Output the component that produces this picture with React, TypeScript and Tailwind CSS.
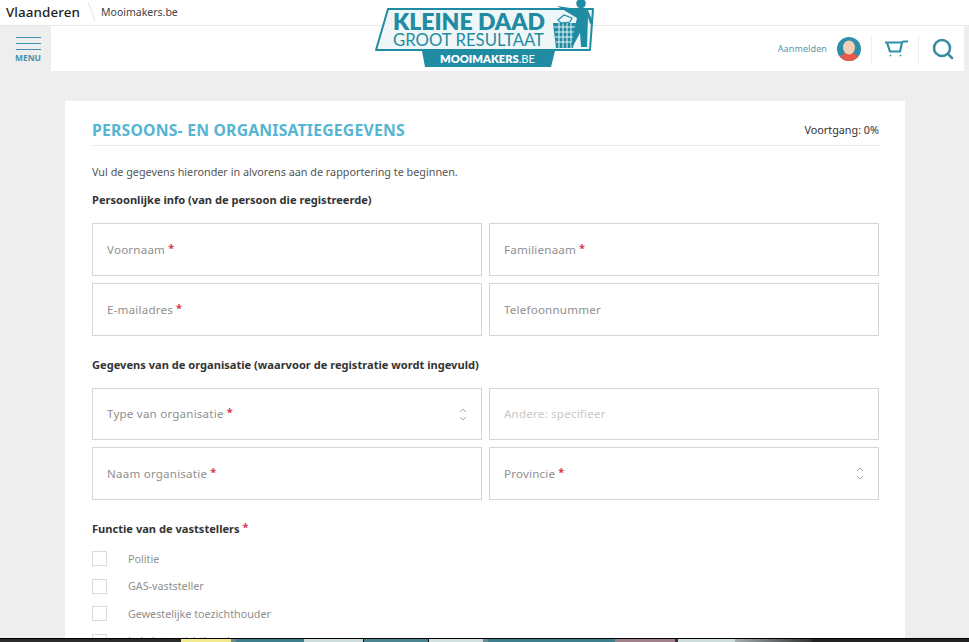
import React from 'react';
import { Search } from 'lucide-react';

const font = { fontFamily: '"Noto Sans", "Open Sans", sans-serif' };

function Star() {
  return <span className="text-[#e0344f] font-bold ml-[3px] relative -top-[2px] text-[11px]">*</span>;
}

function Field({ label, required, muted, select, short }: { label: string; required?: boolean; muted?: boolean; select?: boolean; short?: boolean }) {
  return (
    <div className={`${short ? 'h-[52px]' : 'h-[53px]'} border border-[#d5d5d5] flex items-center justify-between pl-[14px] pr-[13px]`}>
      <span className={`text-[11.6px] tracking-[0.2px] ${muted ? 'text-[#c8c8c8]' : 'text-[#8f8f8f]'}`}>
        {label}
        {required && <Star />}
      </span>
      {select && (
        <svg width="10" height="15" viewBox="0 0 10 15" fill="none" stroke="#a5a5a5" strokeWidth="1">
          <path d="M2 5l3-3 3 3M2 10l3 3 3-3" />
        </svg>
      )}
    </div>
  );
}

function Check({ label }: { label: string }) {
  return (
    <div className="flex items-center h-[27.5px]">
      <span className="w-[15px] h-[15px] border border-[#dcdcdc] shrink-0" />
      <span className="ml-[21px] text-[10.75px] text-[#8f8f8f]">{label}</span>
    </div>
  );
}

function Logo() {
  return (
    <svg width="222" height="68" viewBox="0 0 222 68" className="absolute left-[375px] top-0">
      <path d="M13 9H218L215 50H1Z" fill="#eef6f7" stroke="#1f8ca3" strokeWidth="2" strokeLinejoin="round" />
      <path d="M47 51H180L176 67H50Z" fill="#1f8ca3" />
      <text x="18" y="30" fontSize="22" fontWeight="800" fill="#1f8ca3" textLength="152" lengthAdjust="spacingAndGlyphs" fontFamily="Lato, sans-serif">KLEINE DAAD</text>
      <text x="18" y="46" fontSize="17" fontWeight="400" fill="#1f8ca3" textLength="151" lengthAdjust="spacingAndGlyphs" fontFamily="Lato, sans-serif">GROOT RESULTAAT</text>
      <text x="65" y="63" fontSize="11" fontWeight="800" fill="#ffffff" textLength="95" lengthAdjust="spacingAndGlyphs" fontFamily="Lato, sans-serif">
        MOOIMAKERS<tspan fontWeight="400">.BE</tspan>
      </text>
      {/* trash can */}
      <path d="M178 23H201L198 48H181Z" fill="#1f8ca3" />
      <path d="M179 27H200M180 32H200M180 37H199M181 42H198M184 23V48M188 23V48M192 23V48M196 23V48" stroke="#eef6f7" strokeWidth="1" />
      <path d="M183 20l6-5 8 3-2 4-9 1Z" fill="#eef6f7" stroke="#1f8ca3" strokeWidth="1.2" />
      {/* figure */}
      <circle cx="206" cy="3.500" r="4.800" fill="#1f8ca3" />
      <path d="M182 6L202 9 212 8 218 22 215 24 213 17 212 47H206L205 33 198 46 196 45 202 18Z" fill="#1f8ca3" />
    </svg>
  );
}

function Avatar() {
  return (
    <svg width="24" height="24" viewBox="0 0 24 24">
      <circle cx="12" cy="12" r="12" fill="#2f8fa8" />
      <path d="M3 20C5 16.500 8 16 12 16s7 .5 9 4A12 12 0 0 1 3 20Z" fill="#e8584d" />
      <ellipse cx="12" cy="10.500" rx="6" ry="7" fill="#f3cfb8" />
    </svg>
  );
}

function Cart() {
  return (
    <svg width="23" height="17" viewBox="0 0 23 17" fill="none" stroke="#2f8fa8" strokeWidth="2.200">
      <path d="M0 2.500H17M2 2.500L5 11.500H15L17 2.500Q17.500 1.500 19 1.500H23" />
      <circle cx="5.500" cy="15.500" r="0.500" fill="#2f8fa8" strokeWidth="1" />
      <circle cx="15.500" cy="15.500" r="0.500" fill="#2f8fa8" strokeWidth="1" />
    </svg>
  );
}

const taskbar = [
  { w: 'w-[181px]', c: 'bg-[#2b2b2b]' },
  { w: 'w-[50px]', c: 'bg-[#f0e98e]' },
  { w: 'w-[5px]', c: 'bg-[#6d8a90]' },
  { w: 'w-[68px]', c: 'bg-[#3f7f8c]' },
  { w: 'w-[59px]', c: 'bg-[#cfdcdc]' },
  { w: 'w-px', c: 'bg-[#111111]' },
  { w: 'w-[64px]', c: 'bg-[#4a8591]' },
  { w: 'w-px', c: 'bg-[#111111]' },
  { w: 'w-[54px]', c: 'bg-[#d3e0e0]' },
  { w: 'w-[5px]', c: 'bg-[#6d8a90]' },
  { w: 'w-[127px]', c: 'bg-[#3f7f8c]' },
  { w: 'w-[60px]', c: 'bg-[#a0808a]' },
  { w: 'w-[3px]', c: 'bg-[#333333]' },
  { w: 'w-[57px]', c: 'bg-[#cfdcdc]' },
  { w: 'w-[77px]', c: 'bg-linear-to-r from-[#a5b0b0] to-[#333333]' },
  { w: 'flex-1', c: 'bg-[#222222]' },
];

export default function App() {
  return (
    <div className="relative h-[642px] overflow-hidden bg-[#eeeeee] flex flex-col" style={font}>
      {/* Vlaanderen bar */}
      <div className="h-[26px] shrink-0 bg-white border-b border-[#e8e8e8] flex items-center pl-[6px]">
        <span className="text-[13.4px] font-medium text-[#222] tracking-[0.1px]">Vlaanderen</span>
        <svg width="12" height="24" viewBox="0 0 12 24" className="ml-[7px]">
          <path d="M1 1l7 19" stroke="#e5e5e5" fill="none" />
        </svg>
        <span className="ml-[2px] text-[10.5px] text-[#444]">Mooimakers.be</span>
      </div>

      {/* Site nav */}
      <div className="h-[45px] shrink-0 mx-[5px] flex">
        <div className="w-[46px] flex flex-col items-center pt-[11px]">
          <div className="w-[25px] flex flex-col gap-[5px]">
            <div className="h-px bg-[#3c93ab]" />
            <div className="h-px bg-[#3c93ab]" />
            <div className="h-px bg-[#3c93ab]" />
          </div>
          <span className="text-[8.500px] font-bold text-[#4a93ab] leading-none mt-[4px]">MENU</span>
        </div>
        <div className="flex-1 bg-white flex items-center justify-end">
          <span className="text-[9px] tracking-[0.1px] text-[#5b97ab] pt-px">Aanmelden</span>
          <div className="ml-[10px]">
            <Avatar />
          </div>
          <div className="ml-[10px] w-px h-[28px] bg-[#eeeeee]" />
          <div className="ml-[13px]">
            <Cart />
          </div>
          <div className="ml-[10px] w-px h-[28px] bg-[#eeeeee]" />
          <Search size={24} strokeWidth={2.600} className="text-[#3c8da3] ml-[12px] mr-[9px]" />
        </div>
      </div>

      <Logo />

      {/* Form card */}
      <div className="flex-1 min-h-0 overflow-hidden mt-[30px] mr-[64px] ml-[65px] bg-white pl-[27px] pr-[26px] pt-[19px]">
        <div className="h-[26px] border-b border-[#e8e8e8] flex justify-between items-start">
          <h1 className="text-[15.75px] font-bold text-[#55b5d2] leading-[20px] tracking-[0.2px]">PERSOONS- EN ORGANISATIEGEGEVENS</h1>
          <span className="text-[10.8px] text-[#333] leading-[20px]">Voortgang: 0%</span>
        </div>
        <p className="mt-[17px] text-[10.8px] text-[#555] leading-[18px]">Vul de gegevens hieronder in alvorens aan de rapportering te beginnen.</p>
        <h2 className="mt-[11px] text-[11.1px] font-bold text-[#333] leading-[16px]">Persoonlijke info (van de persoon die registreerde)</h2>

        <div className="mt-[15px] grid grid-cols-2 gap-[7px]">
          <Field label="Voornaam" required />
          <Field label="Familienaam" required />
          <Field label="E-mailadres" required />
          <Field label="Telefoonnummer" />
        </div>

        <h2 className="mt-[21px] text-[11.1px] font-bold text-[#333] leading-[16px]">Gegevens van de organisatie (waarvoor de registratie wordt ingevuld)</h2>

        <div className="mt-[15px] grid grid-cols-2 gap-[7px]">
          <Field label="Type van organisatie" required select short />
          <Field label="Andere: specifieer" muted short />
          <Field label="Naam organisatie" required />
          <Field label="Provincie" required select />
        </div>

        <h2 className="mt-[21px] text-[11.1px] font-bold text-[#333] leading-[16px]">
          Functie van de vaststellers
          <Star />
        </h2>

        <div className="mt-[8px]">
          <Check label="Politie" />
          <Check label="GAS-vaststeller" />
          <Check label="Gewestelijke toezichthouder" />
          <Check label="Lokale toezichthouder" />
        </div>
      </div>

      {/* Windows taskbar remnant */}
      <div className="absolute left-0 right-0 bottom-0 h-[4px] flex bg-[#111] border-t border-black">
        {taskbar.map((t, i) => (
          <div key={i} className={`${t.w} ${t.c}`} />
        ))}
      </div>
    </div>
  );
}
